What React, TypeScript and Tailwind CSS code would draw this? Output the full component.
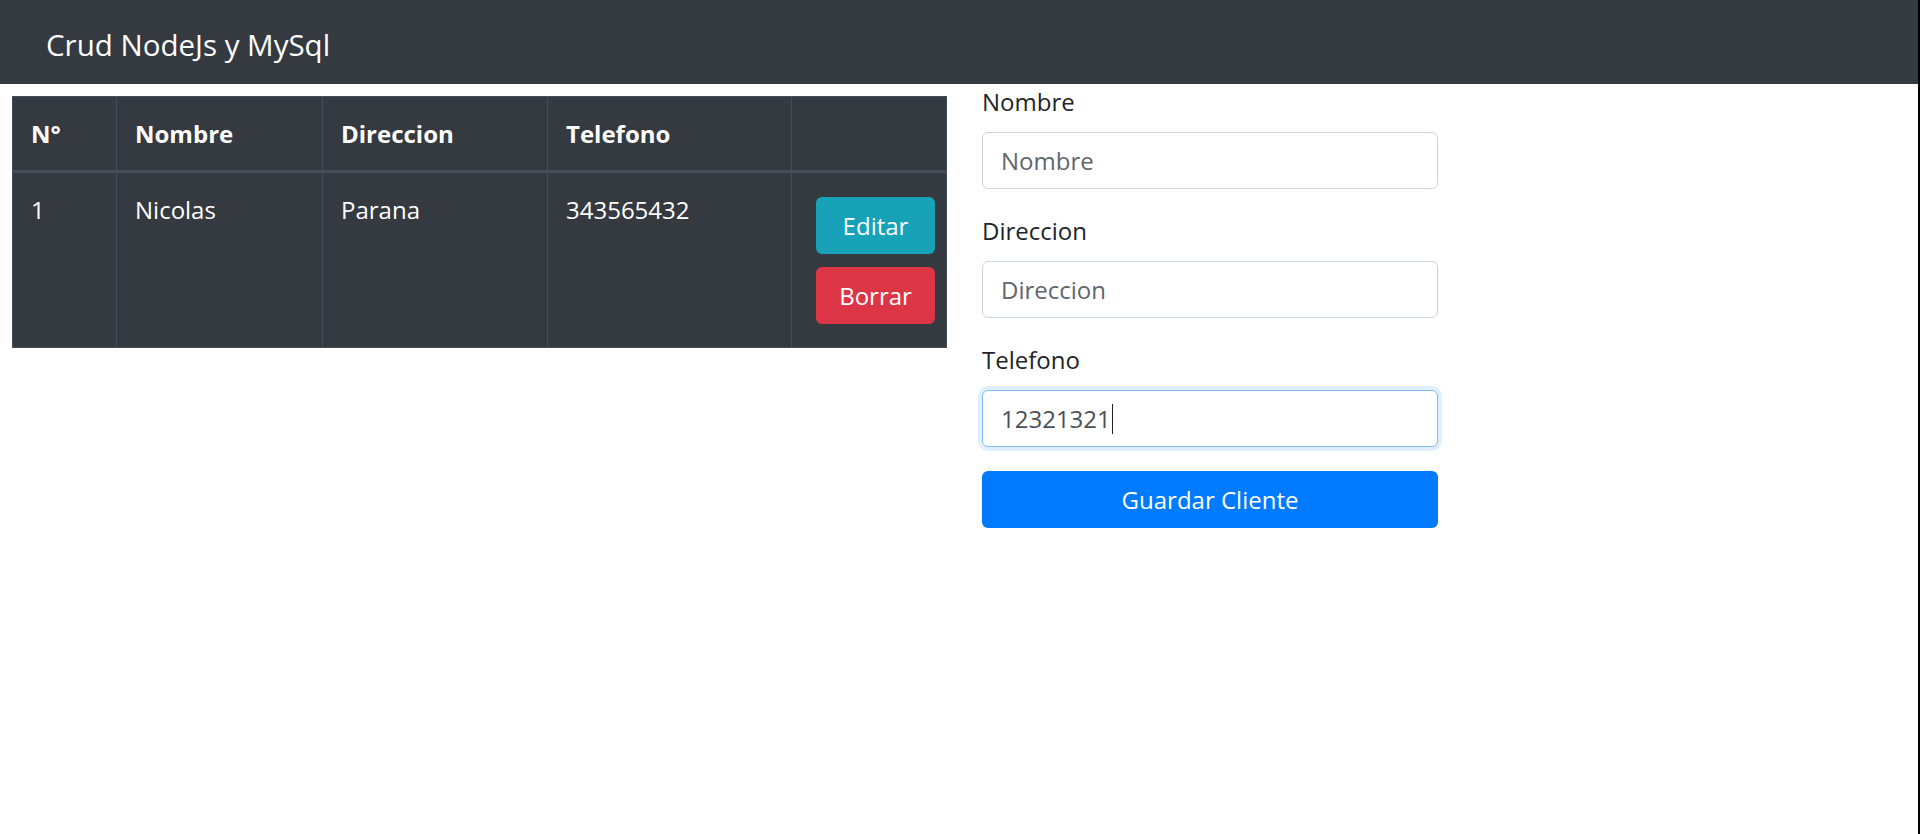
import React from 'react'

type Cliente = {
  id: number
  nombre: string
  direccion: string
  telefono: string
}

const clientes: Cliente[] = [
  { id: 1, nombre: 'Nicolas', direccion: 'Parana', telefono: '343565432' },
]

const cell = 'border border-[#454d55] align-top'

function Tabla() {
  return (
    <table className="w-[935px] table-fixed border-collapse bg-[#343a40] text-left text-[24px] leading-[36px] text-white">
      <colgroup>
        <col className="w-[104px]" />
        <col className="w-[206px]" />
        <col className="w-[225px]" />
        <col className="w-[244px]" />
        <col />
      </colgroup>
      <thead>
        <tr>
          <th className={`${cell} border-b-[3px] px-[18px] pt-[19px] pb-[18px] font-bold`}>N°</th>
          <th className={`${cell} border-b-[3px] px-[18px] pt-[19px] pb-[18px] font-bold`}>Nombre</th>
          <th className={`${cell} border-b-[3px] px-[18px] pt-[19px] pb-[18px] font-bold`}>Direccion</th>
          <th className={`${cell} border-b-[3px] px-[18px] pt-[19px] pb-[18px] font-bold`}>Telefono</th>
          <th className={`${cell} border-b-[3px] px-[18px] pt-[19px] pb-[18px]`}></th>
        </tr>
      </thead>
      <tbody>
        {clientes.map(c => (
          <tr key={c.id}>
            <td className={`${cell} px-[18px] pt-[19px]`}>{c.id}</td>
            <td className={`${cell} px-[18px] pt-[19px]`}>{c.nombre}</td>
            <td className={`${cell} px-[18px] pt-[19px]`}>{c.direccion}</td>
            <td className={`${cell} px-[18px] pt-[19px]`}>{c.telefono}</td>
            <td className={`${cell} pl-[24px] pt-[24px] pb-[23px]`}>
              <div className="flex flex-col gap-[13px]">
                <button className="h-[57px] w-[119px] rounded-[6px] bg-[#17a2b8] text-[24px] text-white">
                  Editar
                </button>
                <button className="h-[57px] w-[119px] rounded-[6px] bg-[#dc3545] text-[24px] text-white">
                  Borrar
                </button>
              </div>
            </td>
          </tr>
        ))}
      </tbody>
    </table>
  )
}

function Campo({ label, placeholder }: { label: string; placeholder: string }) {
  return (
    <div className="mb-[24px]">
      <label className="mb-[12px] block text-[24px] leading-[36px] text-[#212529]">{label}</label>
      <input
        placeholder={placeholder}
        className="block h-[57px] w-full rounded-[6px] border border-[#ced4da] bg-white px-[18px] text-[24px] text-[#495057] outline-none placeholder:text-[#5f666d]"
      />
    </div>
  )
}

export default function App() {
  return (
    <div
      className="flex min-h-[834px] bg-white"
      style={{ fontFamily: '"Open Sans", "Noto Sans", sans-serif' }}
    >
      <div className="flex-1">
        <nav className="flex h-[84px] items-center bg-[#343a40] pl-[46px] pt-[4px]">
          <span className="text-[29.5px] leading-[45px] text-white">Crud NodeJs y MySql</span>
        </nav>

        <div className="flex gap-[35px] pl-[12px]">
          <div className="pt-[12px]">
            <Tabla />
          </div>

          <form className="w-[456px]" onSubmit={e => e.preventDefault()}>
            <Campo label="Nombre" placeholder="Nombre" />
            <Campo label="Direccion" placeholder="Direccion" />

            <div className="mb-[24px]">
              <label className="mb-[12px] block text-[24px] leading-[36px] text-[#212529]">Telefono</label>
              {/* input con foco: texto + cursor */}
              <div className="flex h-[57px] w-full items-center rounded-[6px] border border-[#80bdff] bg-white px-[18px] text-[24px] text-[#495057] shadow-[0_0_0_4px_rgba(0,123,255,0.12)]">
                <span>12321321</span>
                <span className="ml-px h-[30px] w-px bg-[#222]" />
              </div>
            </div>

            <button className="h-[57px] w-full rounded-[6px] bg-[#007bff] text-[24px] text-white">
              Guardar Cliente
            </button>
          </form>
        </div>
      </div>
      <div className="w-[2px] bg-black" />
    </div>
  )
}
